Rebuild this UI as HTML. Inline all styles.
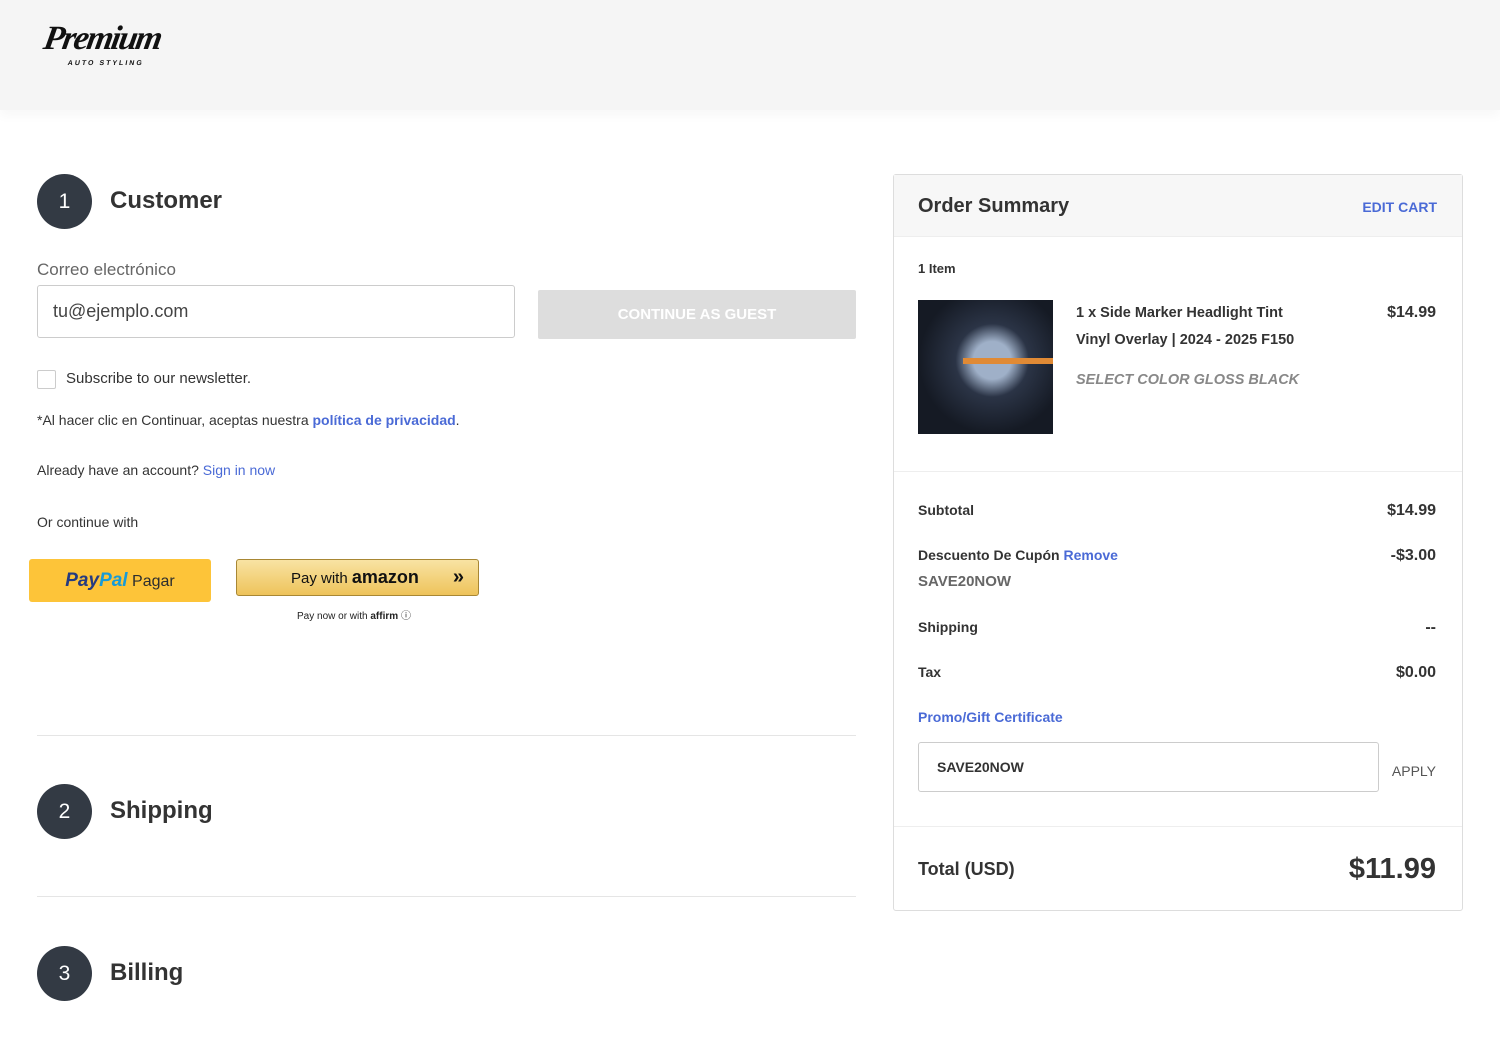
<!DOCTYPE html>
<html><head><meta charset="utf-8"><style>
*{box-sizing:border-box;margin:0;padding:0}
body{width:1500px;height:1043px;overflow:hidden;background:#fff;font-family:"Liberation Sans",Arial,sans-serif;color:#333;position:relative}
.hdr{position:absolute;left:0;top:0;width:1500px;height:110px;background:#f5f5f5;box-shadow:0 6px 10px rgba(0,0,0,0.03)}
.logo{position:absolute;left:44px;top:20px;font-family:"Liberation Serif",serif;font-style:italic;font-weight:bold;font-size:34px;color:#111;letter-spacing:-2px;transform:skewX(-10deg)}
.logo small{position:absolute;left:28px;top:40px;font-size:7px;font-style:normal;letter-spacing:2px;font-family:"Liberation Sans",sans-serif}
.abs{position:absolute}
.step{position:absolute;left:37px;width:55px;height:55px;border-radius:50%;background:#333a44;color:#fff;font-size:21px;text-align:center;line-height:55px}
.sth{position:absolute;left:110px;font-size:24px;font-weight:bold;color:#333}
.hr{position:absolute;left:37px;width:819px;height:1px;background:#e5e5e5}
a{color:#4a6ad6;text-decoration:none}
.os{position:absolute;left:893px;top:174px;width:570px;height:737px;border:1px solid #ddd;border-radius:3px}
.r{position:absolute;right:26px;font-weight:bold;font-size:16px;color:#333}
.l{position:absolute;left:24px;font-size:14px;font-weight:bold;color:#333}
</style></head><body>
<div class="hdr"><div class="logo">Premium<small>AUTO STYLING</small></div></div>

<div class="step" style="top:174px">1</div><div class="sth" style="top:187px">Customer</div>
<div class="abs" style="left:37px;top:260px;font-size:17px;color:#666">Correo electrónico</div>
<div class="abs" style="left:37px;top:285px;width:478px;height:53px;border:1px solid #ccc;border-radius:3px;padding:15px;font-size:18px;color:#444">tu@ejemplo.com</div>
<div class="abs" style="left:538px;top:290px;width:318px;height:49px;background:#ddd;border-radius:2px;color:#fff;font-weight:bold;font-size:15px;text-align:center;line-height:49px">CONTINUE AS GUEST</div>
<div class="abs" style="left:37px;top:370px;width:19px;height:19px;border:1px solid #ccc;border-radius:2px"></div>
<div class="abs" style="left:66px;top:370px;font-size:15px;color:#333">Subscribe to our newsletter.</div>
<div class="abs" style="left:37px;top:412px;font-size:14px;color:#333">*Al hacer clic en Continuar, aceptas nuestra <a style="font-weight:bold">política de privacidad</a>.</div>
<div class="abs" style="left:37px;top:462px;font-size:14px;color:#333">Already have an account? <a>Sign in now</a></div>
<div class="abs" style="left:37px;top:514px;font-size:14px;color:#333">Or continue with</div>
<div class="abs" style="left:29px;top:559px;width:182px;height:43px;background:#fdc439;border-radius:3px;text-align:center;line-height:43px;font-size:16px;color:#2c2e2f"><b style="font-style:italic;font-size:19px;color:#253b80">Pay</b><b style="font-style:italic;font-size:19px;color:#179bd7">Pal</b> Pagar</div>
<div class="abs" style="left:236px;top:559px;width:243px;height:37px;background:linear-gradient(#f8e3a3,#eec35a);border:1px solid #a88734;border-radius:3px;font-size:15px;line-height:34px;padding-left:54px;color:#111">Pay with <b style="font-size:18px">amazon</b><b style="position:absolute;right:14px;font-size:20px">»</b></div>
<div class="abs" style="left:297px;top:607px;font-size:10px;color:#222">Pay now or with <b>affirm</b> ⓘ</div>

<div class="hr" style="top:735px"></div>
<div class="step" style="top:784px">2</div><div class="sth" style="top:797px">Shipping</div>
<div class="hr" style="top:896px"></div>
<div class="step" style="top:946px">3</div><div class="sth" style="top:959px">Billing</div>

<div class="os">
<div class="abs" style="left:0;top:0;width:568px;height:62px;background:#f7f7f7;border-bottom:1px solid #eee"></div>
<div class="abs" style="left:24px;top:20px;font-size:20px;font-weight:bold;color:#333">Order Summary</div>
<div class="abs" style="right:25px;top:24px;font-size:14px;font-weight:bold;color:#4a6ad6">EDIT CART</div>
<div class="l" style="top:86px;font-size:13px">1 Item</div>
<div class="abs" style="left:24px;top:125px;width:135px;height:134px;background:radial-gradient(circle at 55% 45%,#9fb0c8 0 18%,#2b3446 35%,#151a24 70%)"><div style="position:absolute;left:45px;top:58px;width:90px;height:6px;background:#e08a35"></div></div>
<div class="abs" style="left:182px;top:125px;font-size:14.5px;font-weight:bold;line-height:27px;color:#333">1 x Side Marker Headlight Tint<br>Vinyl Overlay | 2024 - 2025 F150</div>
<div class="abs" style="left:182px;top:197px;font-size:14.5px;font-weight:bold;font-style:italic;color:#888">SELECT COLOR GLOSS BLACK</div>
<div class="r" style="top:129px">$14.99</div>
<div class="abs" style="left:0;top:296px;width:568px;height:1px;background:#eee"></div>
<div class="l" style="top:327px">Subtotal</div><div class="r" style="top:327px">$14.99</div>
<div class="l" style="top:372px">Descuento De Cupón <a>Remove</a></div><div class="r" style="top:372px">-$3.00</div>
<div class="abs" style="left:24px;top:398px;font-size:15px;font-weight:bold;color:#666">SAVE20NOW</div>
<div class="l" style="top:444px">Shipping</div><div class="r" style="top:444px">--</div>
<div class="l" style="top:489px">Tax</div><div class="r" style="top:489px">$0.00</div>
<div class="l" style="top:534px;color:#4a6ad6">Promo/Gift Certificate</div>
<div class="abs" style="left:24px;top:567px;width:461px;height:50px;border:1px solid #ccc;border-radius:3px;padding:16px 18px;font-size:14px;font-weight:bold;color:#333">SAVE20NOW</div>
<div class="abs" style="right:26px;top:588px;font-size:14px;color:#555">APPLY</div>
<div class="abs" style="left:0;top:651px;width:568px;height:1px;background:#eee"></div>
<div class="l" style="top:684px;font-size:18px">Total (USD)</div>
<div class="r" style="top:678px;font-size:29px">$11.99</div>
</div>
</body></html>
